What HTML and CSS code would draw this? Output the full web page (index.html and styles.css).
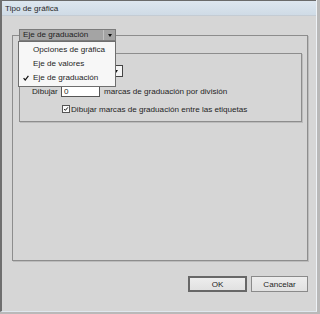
FILE: index.html
```html
<!DOCTYPE html>
<html lang="es">
<head>
<meta charset="utf-8">
<title>Tipo de gráfica</title>
<link rel="stylesheet" href="styles.css">
</head>
<body>
<div class="frame">
  <div class="window">
    <div class="titlebar">Tipo de gráfica</div>
    <div class="content">
      <fieldset class="group">
        <legend class="legend">
          <div class="select select-open">
            <span class="select-text">Eje de graduación</span>
            <span class="select-arrow"><span class="tri"></span></span>
          </div>
        </legend>
        <div class="inner">
          <div class="row row-select">
            <div class="select select-small">
              <span class="select-text"></span>
              <span class="select-arrow plain"><span class="tri"></span></span>
            </div>
          </div>
          <div class="row row-draw">
            <span class="label">Dibujar</span>
            <span class="input">0</span>
            <span class="after">marcas de graduación por división</span>
          </div>
          <div class="row row-check">
            <span class="checkbox">
              <svg width="8" height="8" viewBox="0 0 8 8"><polyline points="1.5,4 3.2,5.8 6.5,1.8" fill="none" stroke="#111" stroke-width="1.3"/></svg>
            </span>
            <span class="after">Dibujar marcas de graduación entre las etiquetas</span>
          </div>
        </div>
      </fieldset>
      <div class="footer">
        <div class="btn btn-default">OK</div>
        <div class="btn">Cancelar</div>
      </div>
    </div>
    <div class="menu">
      <div class="menu-item">Opciones de gráfica</div>
      <div class="menu-item">Eje de valores</div>
      <div class="menu-item checked">
        <svg class="check" width="6" height="6" viewBox="0 0 6 6"><polyline points="0.6,3.2 2.2,5 5.4,0.8" fill="none" stroke="#111" stroke-width="1.2"/></svg>
        Eje de graduación
      </div>
    </div>
  </div>
</div>
</body>
</html>
```

FILE: styles.css
```css
* { box-sizing: border-box; }
html, body { margin: 0; padding: 0; }
body {
  font-family: "Liberation Sans", Arial, sans-serif;
  font-size: 8.1px;
  color: #1e1e1e;
  background: #bdbdbd;
}
.frame {
  width: 320px;
  height: 314px;
  padding: 0 3px 2px 0;
  background: #b9b9b9;
}
.window {
  position: relative;
  width: 317px;
  height: 312px;
  background: #d6d6d6;
  border-left: 2px solid #6f6f6f;
  border-right: 1px solid #eef2f6;
  border-bottom: 1px solid #e0e7ef;
  display: flex;
  flex-direction: column;
}
.titlebar {
  height: 16px;
  line-height: 15px;
  padding-left: 3px;
  border-top: 1px solid #6a6a6a;
  border-bottom: 1px solid #c4ccd4;
  background: linear-gradient(#dde6ef, #cfdbe6);
  color: #2a2a2a;
  flex: none;
}
.content {
  flex: 1;
  display: flex;
  flex-direction: column;
}
.group {
  margin: 13px 0 0 10px;
  padding: 0;
  width: 296px;
  height: 232px;
  border: 1px solid #8d8d8d;
  box-shadow: 1px 1px 0 #bcbcbc;
  min-inline-size: 0;
}
.legend {
  padding: 0;
  margin-left: 6px;
}
.select {
  display: flex;
  align-items: stretch;
  height: 12px;
  border: 1px solid #7c7c7c;
  background: #a4a4a4;
}
.select-open { width: 97px; }
.select-text {
  flex: 1;
  padding-left: 3px;
  line-height: 10px;
  white-space: nowrap;
}
.select-arrow {
  width: 12px;
  border-left: 1px solid #c2c2c2;
  display: flex;
  align-items: center;
  justify-content: center;
}
.select-arrow.plain { border-left: none; }
.tri {
  width: 0;
  height: 0;
  border-left: 2.5px solid transparent;
  border-right: 2.5px solid transparent;
  border-top: 3px solid #111;
}
.inner {
  margin: 12px 5px 0 6px;
  height: 69px;
  border: 1px solid #8d8d8d;
  box-shadow: 1px 1px 0 #bcbcbc;
  padding: 11px 0 0 12px;
  display: flex;
  flex-direction: column;
}
.row { display: flex; align-items: center; }
.row-select { height: 12px; padding-left: 29px; }
.select-small {
  width: 62px;
  background: #f4f4f4;
  border-color: #444;
}
.row-draw { margin-top: 9px; height: 11px; }
.label { width: 29px; }
.input {
  width: 39px;
  height: 11px;
  line-height: 9px;
  border: 1px solid #555;
  background: #fff;
  padding-left: 2px;
}
.after { margin-left: 4px; white-space: nowrap; }
.row-check { margin-top: 8px; height: 8px; padding-left: 30px; }
.row-check .after { margin-left: 1px; }
.checkbox {
  width: 8px;
  height: 8px;
  border: 1px solid #555;
  background: #fafafa;
  display: flex;
  align-items: center;
  justify-content: center;
}
.checkbox svg { width: 6px; height: 6px; }
.footer {
  display: flex;
  justify-content: flex-end;
  gap: 4px;
  margin-top: 15px;
  padding-right: 8px;
}
.btn {
  width: 57px;
  height: 16px;
  border: 1px solid #8a8a8a;
  background: linear-gradient(#ededed, #e1e1e1);
  display: flex;
  align-items: center;
  justify-content: center;
}
.btn-default {
  width: 59px;
  border: 2px solid #676767;
}
.menu {
  position: absolute;
  left: 16px;
  top: 41px;
  width: 98px;
  height: 46px;
  background: #f7f7f7;
  border: 1px solid #6e6e6e;
  padding-top: 1px;
}
.menu-item {
  height: 14px;
  line-height: 14px;
  padding-left: 14px;
  position: relative;
  white-space: nowrap;
}
.check {
  position: absolute;
  left: 4px;
  top: 4px;
}
```
